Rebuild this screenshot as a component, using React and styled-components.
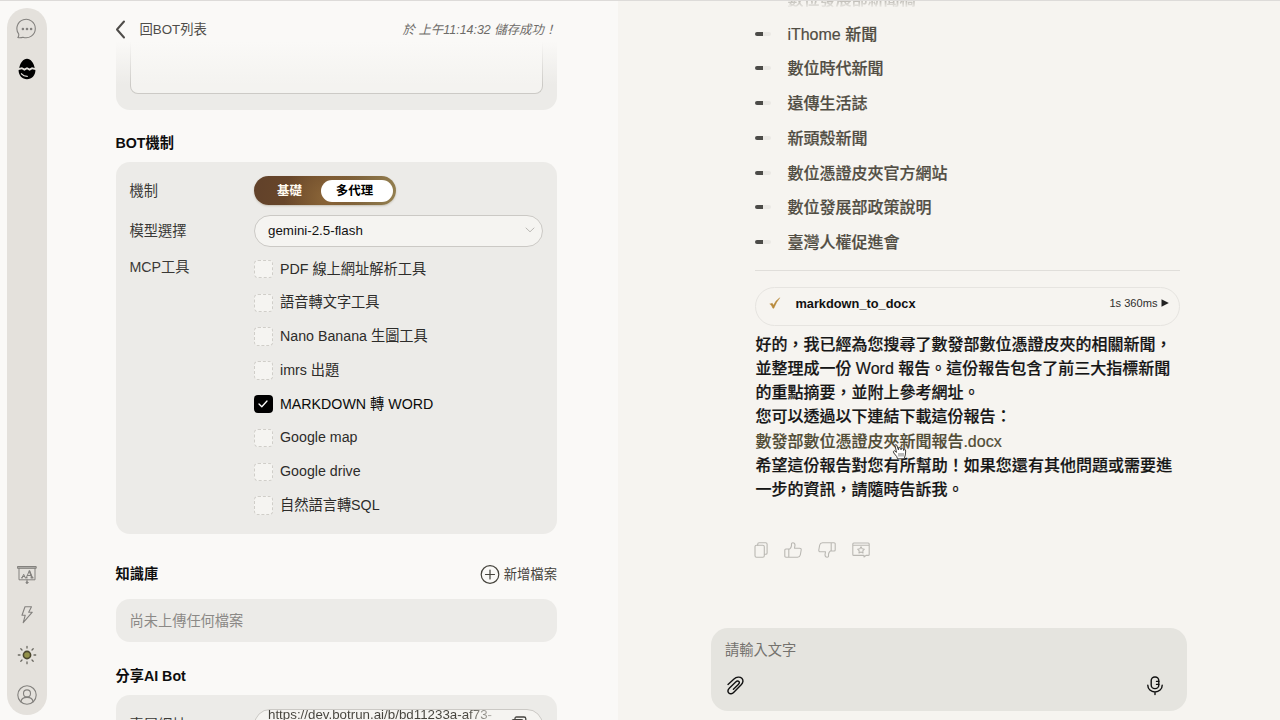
import React from "react";
import styled, { createGlobalStyle, css } from "styled-components";

const GlobalStyle = createGlobalStyle`
  *, *::before, *::after { box-sizing: border-box; }
  body {
    margin: 0;
    background: #faf9f7;
    font-family: "Liberation Sans", "Noto Sans CJK TC", sans-serif;
    color: #2b2a28;
    overflow: hidden;
  }
  ul, p, h2, hr { margin: 0; padding: 0; }
  a { color: inherit; text-decoration: none; }
  svg { display: block; }
`;

const Page = styled.div`
  display: flex;
  width: 1280px;
  height: 720px;
  overflow: hidden;
  border-top: 1px solid #dddbd9;
`;

const Rail = styled.nav`
  display: flex;
  flex-direction: column;
  align-items: center;
  width: 40px;
  height: 707px;
  margin: 7px 0 0 7px;
  padding: 10px 0 9px;
  border-radius: 20px;
  background: #e4e1dc;
  color: #83817e;
`;

const RailItem = styled.span`
  display: grid;
  place-items: center;
  width: 24px;
  height: 22px;
  color: ${(p) => (p.$active ? "#000" : "inherit")};
  & + & { margin-top: 18px; }
`;

const RailGap = styled.span`
  flex: 1;
  & + span { margin-top: 0; }
`;

const Settings = styled.section`
  position: relative;
  width: 571px;
  height: 719px;
  padding: 0 61px 0 68.5px;
  overflow: hidden;
`;

const TopFade = styled.header`
  position: absolute;
  inset: 0 0 auto 0;
  display: flex;
  align-items: flex-start;
  justify-content: space-between;
  height: 84px;
  padding: 18px 61.5px 0 68px;
  background: linear-gradient(#faf9f7 0 48%, rgba(250, 249, 247, 0));
`;

const BackLink = styled.a`
  display: flex;
  align-items: center;
  gap: 13.5px;
  font-size: 13.33px;
  line-height: 21px;
  color: #4f4d4a;
`;

const SavedNote = styled.span`
  width: 154px;
  padding-top: 0.5px;
  font-size: 12.44px;
  font-style: italic;
  line-height: 21px;
  white-space: nowrap;
  color: #6d6b68;
`;

const Card = styled.div`
  border-radius: 14px;
  background: #ecebe8;
  padding: ${(p) => p.$pad || "14px"};
  height: ${(p) => p.$h};
`;

const PromptBox = styled.div`
  height: 93px;
  border: 1px solid #cccac6;
  border-top: 0;
  border-radius: 0 0 8px 8px;
  background: #f4f3f0;
`;

const SectionHead = styled.div`
  display: flex;
  align-items: center;
  justify-content: space-between;
  height: ${(p) => p.$h};
  padding-top: ${(p) => p.$top};
`;

const SectionTitle = styled.h2`
  font-size: 14.22px;
  line-height: 20px;
  font-weight: 700;
  color: #0d0d0d;
`;

const AddFile = styled.span`
  display: flex;
  align-items: center;
  gap: 4px;
  padding-top: 3px;
  font-size: 13.33px;
  line-height: 20px;
  color: #45433c;
`;

const FieldRow = styled.div`
  display: grid;
  grid-template-columns: 124.5px 1fr;
  align-items: ${(p) => (p.$top ? "start" : "center")};
  margin-bottom: ${(p) => p.$gap || 0};
`;

const FieldLabel = styled.span`
  font-size: 14.22px;
  line-height: 20px;
  color: #3a3936;
`;

const Toggle = styled.div`
  display: flex;
  align-items: center;
  justify-content: space-between;
  width: 142px;
  height: 29px;
  padding: 0 3px 0 23px;
  border-radius: 15px;
  background: radial-gradient(circle at 50% 75%, #8a6538, transparent 55%), linear-gradient(100deg, #61412a, #6d4a2a 45%, #948050);
  box-shadow: 0 1px 2px rgba(90, 70, 30, 0.25);
  font-size: 12.44px;
  font-weight: 700;
  line-height: 20px;
  color: #fffaf0;
`;

const ToggleOn = styled.span`
  width: 72px;
  height: 22px;
  border-radius: 11px;
  background: #fff;
  color: #000;
  line-height: 22px;
  text-align: center;
  padding-right: 5px;
`;

const Select = styled.div`
  display: flex;
  align-items: center;
  justify-content: space-between;
  height: 32px;
  padding: 0 7px 1px 13px;
  border: 1px solid #cbc9c5;
  border-radius: 16px;
  background: #f5f4f1;
  font-size: 13.33px;
  color: #111;
`;

const ToolList = styled.ul`
  display: grid;
  grid-auto-rows: 33.8px;
  padding-top: 2px;
  list-style: none;
`;

const Tool = styled.li`
  display: flex;
  align-items: center;
  gap: 7.5px;
  height: 20px;
  font-size: 14.22px;
  line-height: 20px;
  color: ${(p) => (p.$on ? "#0b0b0b" : "#2d2c2a")};
`;

const ToolText = styled.span`
  padding-bottom: 1px;
`;

const Box = styled.span`
  display: grid;
  place-items: center;
  width: 18.5px;
  height: 18.5px;
  border-radius: 4px;
  border: 1px dashed #d0cec9;
  background: #f5f4f1;
  ${(p) => p.$on && css`
    border: 0;
    background: #000;
    color: #fff;
  `}
`;

const Empty = styled.p`
  font-size: 14.22px;
  line-height: 20px;
  color: #8b8986;
`;

const UrlField = styled.div`
  display: flex;
  align-items: flex-start;
  justify-content: space-between;
  height: 32px;
  padding: 0 15px 0 13px;
  border: 1px solid #cbc9c5;
  border-radius: 16px;
  background: #f5f4f1;
  color: #45433f;
`;

const UrlText = styled.span`
  font-size: 13.33px;
  line-height: 15px;
  margin-top: -3px;
  white-space: nowrap;
  background: linear-gradient(90deg, #45433c 88%, #b5b3ad);
  background-clip: text;
  color: transparent;
`;

const CopySlot = styled.span`
  padding-top: 6px;
`;

const Chat = styled.main`
  display: flex;
  flex-direction: column;
  flex: 1;
  height: 719px;
  padding: 0 93px 9px;
  background: #f6f4f0;
  overflow: hidden;
`;

const Message = styled.article`
  position: relative;
  flex: 1;
  padding: 0 7.5px 0 44.4px;
`;

const LinkList = styled.ul`
  list-style: none;
  margin-top: -20.4px;
`;

const LinkItem = styled.li`
  display: flex;
  align-items: center;
  height: 34.72px;
  font-size: 16px;
  font-weight: 500;
  -webkit-text-stroke: 0.2px;
  color: #514d43;
  ${(p) => p.$faded && css`
    opacity: 0.3;
    mask-image: linear-gradient(#000 60%, transparent 82%);
  `}
`;

const Dash = styled.span`
  width: 16px;
  height: 4px;
  margin: 2px 16px 0 0;
  border-radius: 2px;
  background: linear-gradient(90deg, #4c4b48 0 8px, #eae8e4 8px);
`;

const Rule = styled.hr`
  border: 0;
  border-top: 1px solid #e0deda;
  margin: 11.4px 0 16px;
`;

const ToolCall = styled.div`
  display: flex;
  align-items: center;
  height: 39px;
  padding: 0 10px 6px 13px;
  border: 1px solid #e6e4e0;
  border-radius: 20px;
`;

const ToolName = styled.b`
  flex: 1;
  padding-left: 14px;
  font-size: 12.8px;
  color: #111;
`;

const Timing = styled.span`
  padding-right: 3px;
  font-size: 11.1px;
  color: #2f2e2c;
`;

const Reply = styled.div`
  padding-top: 7.5px;
  font-size: 16px;
  font-weight: 500;
  -webkit-text-stroke: 0.2px;
  line-height: 24.07px;
  white-space: nowrap;
  color: #151515;
`;

const Wide = styled.span`
  letter-spacing: 0.03px;
`;

const FileLink = styled.a`
  color: #514c35;
`;

const Actions = styled.div`
  display: flex;
  gap: 16px;
  padding-top: 40.5px;
  margin-left: -1px;
  color: #bab8b3;
`;

const Pointer = styled.span`
  position: absolute;
  left: 181px;
  top: 442px;
`;

const Composer = styled.div`
  display: flex;
  flex-direction: column;
  justify-content: space-between;
  height: 83px;
  padding: 11.5px 23px 15px 14px;
  border-radius: 17px;
  background: #e5e4df;
  color: #111;
`;

const Placeholder = styled.span`
  font-size: 14.22px;
  line-height: 20px;
  color: #74726e;
`;

const ComposerTools = styled.div`
  display: flex;
  justify-content: space-between;
  padding-left: 1px;
`;

const Icon = ({ w = 20, h = w, box = `0 0 ${w} ${h}`, sw = 1.1, children }) => (
  <svg width={w} height={h} viewBox={box} fill="none" stroke="currentColor" strokeWidth={sw} strokeLinecap="round" strokeLinejoin="round">
    {children}
  </svg>
);

const ChatIcon = () => (
  <Icon w={22}>
    <path d="M1.800 19.500Q3 18.500 2.700 16A9.200 9.200 0 1 1 7 19.200Q4.500 20 1.800 19.500Z" />
    <g fill="currentColor" stroke="none"><circle cx="6.900" cy="11" r="1.300" /><circle cx="11" cy="11" r="1.300" /><circle cx="15.100" cy="11" r="1.300" /></g>
  </Icon>
);

const EggIcon = () => (
  <Icon w={18} h={22}>
    <path d="M1.300 9.900C2.200 5 5.300.8 9 .8s6.800 4.200 7.700 9.100L14 9.200 11.600 10.600 9 9.300 6.400 10.600 3.900 9.200Z" fill="currentColor" stroke="none" />
    <path d="M.6 12.100 3.900 11.200 6.400 12.700 9 11.300 11.600 12.700 14.200 11.200 17.400 12.100C17.500 17.600 13.700 21.300 9 21.300S.500 17.600.6 12.100Z" fill="currentColor" stroke="none" />
    <path d="M3.500 15.800Q5.500 18.200 9.300 18.300" stroke="#e4e1dc" strokeWidth="1.300" />
  </Icon>
);

const BoardIcon = () => (
  <Icon w={20} h={20} sw={1}>
    <path d="M.8 1.500H19.200V3.300H.8Z" fill="#b5b2ae" />
    <path d="M2 3.300V14.800H18V3.300M10 14.800V17" />
    <circle cx="10" cy="17.600" r=".9" fill="currentColor" />
    <path d="M9.300 12.800 12.300 5.800 15.400 12.800M8.500 12.800H10.300M13.800 12.800H16.200M10.300 10.500H14.200M5 12.800 6.700 9.300 8.300 12.800M4.500 12.800H5.600M5.700 11.500H7.600" />
    <path d="M12.500 6 15 12.600" strokeWidth="1.600" />
  </Icon>
);

const BoltIcon = () => (
  <Icon w={14} h={20}>
    <path d="M5 1.700H11.500L8.700 7.200H12.300L3.200 17.600 5.200 10.300H2Z" />
  </Icon>
);

const SunIcon = () => (
  <Icon w={20} sw={1.3}>
    <circle cx="10" cy="10" r="3.600" fill="#93914a" stroke="#4b472f" strokeWidth="1.600" />
    <path d="M10 1.300V3M10 17V18.700M1.300 10H3M17 10H18.700M3.800 3.800 5 5M15 15 16.200 16.200M16.200 3.800 15 5M5 15 3.800 16.200" stroke="#6b6962" />
  </Icon>
);

const UserIcon = () => (
  <Icon w={20}>
    <circle cx="10" cy="10" r="9.200" />
    <circle cx="10" cy="8.400" r="3.500" />
    <path d="M4 16.900C4.200 13.700 6.700 12.400 10 12.400S15.800 13.700 16 16.900" />
  </Icon>
);

const PlusCircle = () => (
  <Icon w={20} sw={1.2}><circle cx="10" cy="9.500" r="8.800" /><path d="M5.500 9.500H14.500M10 5V14" /></Icon>
);

const CopyIcon = () => (
  <Icon w={14} h={16} sw={1.1}>
    <rect x="1" y="3.300" width="9.300" height="12" rx="1.500" />
    <path d="M3.700 3.300V2.200Q3.700.8 5.100.8H11.600Q13.100.8 13.100 2.300V11Q13.100 12.300 11.700 12.300H10.500" />
  </Icon>
);

const WideCopyIcon = () => (
  <Icon w={16} h={16} sw={1.3}>
    <path d="M4 3.500V2.500Q4 1 5.500 1H13Q14.800 1 14.800 2.800V9" />
    <path d="M1 14V5.500Q1 3.600 2.800 3.600H10.200Q12 3.600 12 5.500V14" />
  </Icon>
);

const ThumbIcon = ({ down }) => (
  <svg width="18" height="16" viewBox="0 0 18 16" fill="none" stroke="currentColor" strokeWidth="1.1" strokeLinejoin="round" transform={down ? "rotate(180)" : undefined}>
    <path d="M.8 8Q.8 7 1.900 7H4.800V15.200H2Q.8 15.200.8 14ZM4.800 7.500Q7.800 6 7.500 2 7.500.8 8.800.8 11 .8 11 3.200L10.500 6.200H15.500Q17.400 6.200 17.200 8L16.300 13Q15.800 15.200 13.500 15.200H4.800" />
  </svg>
);

const StarBoardIcon = () => (
  <Icon w={18} h={16} sw={1.1}>
    <path d="M11 13.400H1.800Q.8 13.400.8 12.400V2Q.8 1 1.800 1H16.200Q17.200 1 17.200 2V12.400Q17.200 13.400 16.200 13.400H14L12 15V13.400H11M.8 3.200H17.200" />
    <path d="M9 4.800 10.100 6.700 12.300 7.200 10.800 8.800 11 11 9 10.100 7 11 7.200 8.800 5.700 7.200 7.900 6.700Z" />
  </Icon>
);

const ClipIcon = () => (
  <Icon w={20} sw={1.4}>
    <path d="M2 8.400 8 3C10.500.7 14 .5 15.800 2.300S17.200 6.700 15.200 8.700L7.600 16.500C6.200 17.900 4.100 18.200 2.800 16.900S2 13.600 3.500 12.100L9.700 6.100C10.900 4.900 12.200 4.900 12.900 5.600S13.400 7.400 12.300 8.500L7.400 13.300" />
  </Icon>
);

const MicIcon = () => (
  <Icon w={18} h={20} sw={1.4}>
    <rect x="5.200" y="1" width="7.600" height="11.600" rx="3.600" />
    <path d="M1.800 9.200C1.800 13.200 5 16 9 16S16.200 13.200 16.200 9.200M9 16V18.500M10.500 5.400H12.800M10.500 8.400H12.800" />
  </Icon>
);

const HandIcon = () => (
  <svg width="16" height="17" viewBox="0 0 16 17" fill="#fff" stroke="#3e3d3a" strokeWidth="1" strokeLinejoin="round">
    <path d="M5.500 15.800 4.800 13.700 1.800 10Q.7 8.200 2.300 7.700L4.500 9.300 3 2.500Q3.300.8 4.700 2L6.500 7 6.800 4.800Q8 4 8.700 5.200L9 6.800 9.500 5Q10.900 4.700 11.400 6L11.700 7.500 12.300 6Q13.700 6.300 13.700 8L13.300 12 12.200 15.800Z" />
    <path d="M7 10V13.500M9 10V13.500M11 10V13.500" strokeWidth=".7" />
  </svg>
);

const tools = ["PDF 線上網址解析工具", "語音轉文字工具", "Nano Banana 生圖工具", "imrs 出題", "MARKDOWN 轉 WORD", "Google map", "Google drive", "自然語言轉SQL"];
const sources = ["數位發展部新聞稿", "iThome 新聞", "數位時代新聞", "遠傳生活誌", "新頭殼新聞", "數位憑證皮夾官方網站", "數位發展部政策說明", "臺灣人權促進會"];

export default function App() {
  return (
    <Page lang="zh-Hant">
      <GlobalStyle />
      <Rail>
        <RailItem><ChatIcon /></RailItem>
        <RailItem $active><EggIcon /></RailItem>
        <RailGap />
        <RailItem><BoardIcon /></RailItem>
        <RailItem><BoltIcon /></RailItem>
        <RailItem><SunIcon /></RailItem>
        <RailItem><UserIcon /></RailItem>
      </Rail>

      <Settings>
        <Card $h="108.500px" $pad="0 14px"><PromptBox /></Card>

        <SectionHead $h="52.500px" $top="14.500px"><SectionTitle>BOT機制</SectionTitle></SectionHead>
        <Card $h="372px">
          <FieldRow $gap="9.500px">
            <FieldLabel>機制</FieldLabel>
            <Toggle>基礎<ToggleOn>多代理</ToggleOn></Toggle>
          </FieldRow>
          <FieldRow $gap="10.500px">
            <FieldLabel>模型選擇</FieldLabel>
            <Select>
              gemini-2.5-flash
              <Icon w={10} h={6} sw={1}><path d="M1 1 5 4.800 9 1" stroke="#bab8b4" /></Icon>
            </Select>
          </FieldRow>
          <FieldRow $top>
            <FieldLabel>MCP工具</FieldLabel>
            <ToolList>
              {tools.map((name, i) => (
                <Tool key={name} $on={i === 4}>
                  <Box $on={i === 4}>
                    {i === 4 && <Icon w={10} h={8} sw={1.3}><path d="M1 4 3.800 6.800 9 1" /></Icon>}
                  </Box>
                  <ToolText>{name}</ToolText>
                </Tool>
              ))}
            </ToolList>
          </FieldRow>
        </Card>

        <SectionHead $h="65px" $top="14.500px">
          <SectionTitle>知識庫</SectionTitle>
          <AddFile><PlusCircle />新增檔案</AddFile>
        </SectionHead>
        <Card $h="43px" $pad="11.500px 14px"><Empty>尚未上傳任何檔案</Empty></Card>

        <SectionHead $h="52.500px" $top="15px"><SectionTitle>分享AI Bot</SectionTitle></SectionHead>
        <Card $h="100px" $pad="14.500px 14px">
          <FieldRow>
            <FieldLabel>專屬網址</FieldLabel>
            <UrlField>
              <UrlText>https://dev.botrun.ai/b/bd11233a-af73-</UrlText>
              <CopySlot><WideCopyIcon /></CopySlot>
            </UrlField>
          </FieldRow>
        </Card>

        <TopFade>
          <BackLink>
            <Icon w={11} h={20} sw={2}><path d="M9 1.500 2 9.500 9 17.500" /></Icon>
            回BOT列表
          </BackLink>
          <SavedNote>於 上午11:14:32 儲存成功！</SavedNote>
        </TopFade>
      </Settings>

      <Chat>
        <Message>
          <LinkList>
            {sources.map((s, i) => (
              <LinkItem key={s} $faded={i === 0}><Dash />{s}</LinkItem>
            ))}
          </LinkList>
          <Rule />
          <ToolCall>
            <Icon w={12} h={14}><path d="M1.300 8 3.200 7.200 4.500 9.300Q6.500 4.500 10.800 1.800 7.200 6 4.800 12.200H3.900Q3 9.800 1.300 8Z" fill="#b88a3c" stroke="#b88a3c" strokeWidth=".5" /></Icon>
            <ToolName>markdown_to_docx</ToolName>
            <Timing>1s 360ms</Timing>
            <svg width="8" height="8" viewBox="0 0 8 8"><path d="M.5.2 7.800 4 .5 7.800Z" fill="#222" /></svg>
          </ToolCall>
          <Reply>
            <p>好的，我已經為您搜尋了數發部數位憑證皮夾的相關新聞，<br />並整理成一份 Word 報告。這份報告包含了前三大指標新聞<br />的重點摘要，並附上參考網址。</p>
            <p>您可以透過以下連結下載這份報告：</p>
            <p><FileLink>數發部數位憑證皮夾新聞報告.docx</FileLink></p>
            <p><Wide>希望這份報告對您有所幫助！如果您還有其他問題或需要進</Wide><br />一步的資訊，請隨時告訴我。</p>
          </Reply>
          <Actions>
            <CopyIcon />
            <ThumbIcon />
            <ThumbIcon down />
            <StarBoardIcon />
          </Actions>
          <Pointer><HandIcon /></Pointer>
        </Message>
        <Composer>
          <Placeholder>請輸入文字</Placeholder>
          <ComposerTools><ClipIcon /><MicIcon /></ComposerTools>
        </Composer>
      </Chat>
    </Page>
  );
}
